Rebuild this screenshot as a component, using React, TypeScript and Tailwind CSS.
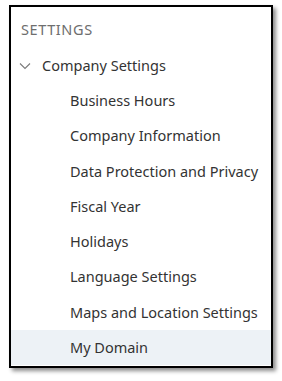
const items = [
  "Business Hours",
  "Company Information",
  "Data Protection and Privacy",
  "Fiscal Year",
  "Holidays",
  "Language Settings",
  "Maps and Location Settings",
  "My Domain",
];

export default function App() {
  return (
    <div className="w-[282px] h-[381px] bg-white pt-[5px] pl-[9px] font-['Noto_Sans',sans-serif]">
      <div className="w-[264px] h-[363px] border-2 border-black bg-white shadow-[3px_3px_4px_rgba(0,0,0,0.45)] flex flex-col">
        <div className="pt-[12px] pl-[10px] leading-[20px] text-[14.5px] tracking-[0.6px] text-[#6e6e6e]">
          SETTINGS
        </div>
        <div className="h-[9px]" />
        <div className="h-[35.25px] flex items-center pl-[8px] text-[14.5px] text-[#333]">
          <svg width="12" height="8" viewBox="0 0 12 8" className="mr-[11px]">
            <path d="M1 1.5 L6 6.5 L11 1.5" fill="none" stroke="#7a7a7a" strokeWidth="1.1" />
          </svg>
          Company Settings
        </div>
        {items.map((item, i) => (
          <div
            key={item}
            className={`h-[35.25px] flex items-center pl-[59px] text-[14.5px] text-[#333] ${
              i === items.length - 1 ? "bg-[#edf2f6]" : ""
            }`}
          >
            {item}
          </div>
        ))}
      </div>
    </div>
  );
}
